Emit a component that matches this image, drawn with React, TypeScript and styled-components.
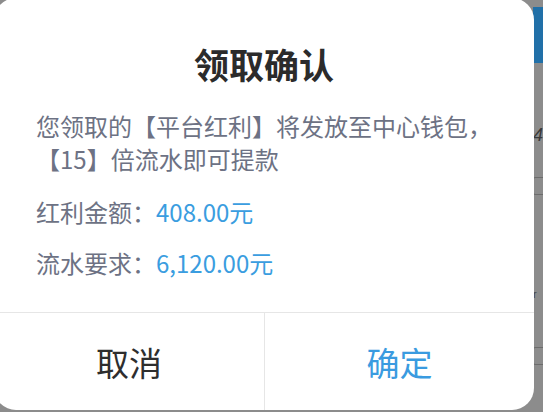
import React from "react";
import styled, { createGlobalStyle } from "styled-components";

const GlobalStyle = createGlobalStyle`
  html, body {
    margin: 0;
    padding: 0;
  }
  body {
    font-family: "Noto Sans CJK SC", "Noto Sans", sans-serif;
  }
`;

const Screen = styled.div`
  position: relative;
  width: 543px;
  height: 412px;
  overflow: hidden;
  background: #8c8c8c;
  display: flex;
  justify-content: flex-end;
`;

// the page under the dimmed overlay, only its right edge shows
const PageEdge = styled.div`
  width: 10px;
  display: flex;
  flex-direction: column;
  align-items: flex-start;
`;

const EdgeHeader = styled.div`
  margin-top: 7px;
  height: 56px;
  width: 100%;
  background: #2170a8;
`;

const EdgeGlyph = styled.span`
  margin-top: 62px;
  font-family: "Liberation Sans", sans-serif;
  font-size: 18px;
  font-style: italic;
  line-height: 20px;
  color: #3a3a3a;
`;

const EdgeBox = styled.div<{ $top: number }>`
  margin-top: ${(p) => p.$top}px;
  width: 12px;
  height: 16px;
  border: 1px solid #6c6c6c;
  border-radius: 2px;
`;

const EdgeMark = styled.span`
  margin-top: 92px;
  font-family: "Liberation Sans", sans-serif;
  font-size: 11px;
  line-height: 14px;
  color: #444;
`;

const Dialog = styled.div`
  position: absolute;
  left: -6px;
  top: -2px;
  width: 540px;
  height: 412px;
  background: #fff;
  border-radius: 22px;
  display: flex;
  flex-direction: column;
  overflow: hidden;
`;

const Body = styled.div`
  flex: 1;
  display: flex;
  flex-direction: column;
  padding: 44px 0 0 42px;
`;

const Title = styled.h2`
  margin: 0 0 23px;
  padding-right: 42px;
  text-align: center;
  font-size: 35px;
  line-height: 44px;
  font-weight: 700;
  color: #2b2b2b;
`;

const Message = styled.p`
  margin: 0 0 20px;
  font-size: 24px;
  line-height: 33px;
  color: #6d7284;
`;

const InfoRow = styled.div<{ $gap?: number }>`
  margin-top: ${(p) => p.$gap ?? 0}px;
  font-size: 24px;
  line-height: 34px;
  color: #6d7284;
`;

const Amount = styled.span`
  color: #3a9de0;
`;

const Footer = styled.div`
  height: 97px;
  display: grid;
  grid-template-columns: 1fr 1fr;
  border-top: 1px solid #e6e6e6;
`;

const ActionButton = styled.button<{ $primary?: boolean }>`
  border: none;
  background: transparent;
  font-family: inherit;
  font-size: 33px;
  color: ${(p) => (p.$primary ? "#3a9be0" : "#2e2e2e")};
  padding: 0;
  cursor: pointer;

  & + & {
    border-left: 1px solid #e6e6e6;
  }
`;

export default function App() {
  return (
    <>
      <GlobalStyle />
      <Screen>
        <PageEdge>
          <EdgeHeader />
          <EdgeGlyph>4</EdgeGlyph>
          <EdgeBox $top={32} />
          <EdgeMark>r</EdgeMark>
          <EdgeBox $top={46} />
        </PageEdge>
        <Dialog>
          <Body>
            <Title>领取确认</Title>
            <Message>
              您领取的【平台红利】将发放至中心钱包，
              <br />
              【15】倍流水即可提款
            </Message>
            <InfoRow>
              红利金额：<Amount>408.00元</Amount>
            </InfoRow>
            <InfoRow $gap={17}>
              流水要求：<Amount>6,120.00元</Amount>
            </InfoRow>
          </Body>
          <Footer>
            <ActionButton>取消</ActionButton>
            <ActionButton $primary>确定</ActionButton>
          </Footer>
        </Dialog>
      </Screen>
    </>
  );
}
